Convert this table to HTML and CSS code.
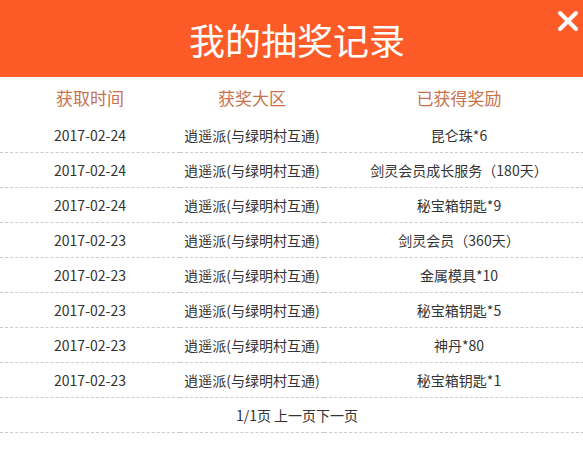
FILE: index.html
```html
<!DOCTYPE html>
<html lang="zh">
<head>
<meta charset="utf-8">
<link rel="stylesheet" href="styles.css">
</head>
<body>
<div class="dialog">
  <div class="head">
    <h1 class="title">我的抽奖记录</h1>
    <svg class="close" width="22" height="22" viewBox="0 0 22 22"><path d="M3 3 L19 19 M19 3 L3 19" stroke="#fff" stroke-width="4" stroke-linecap="round" fill="none"/></svg>
  </div>
  <table class="records">
    <thead>
      <tr><th class="c1">获取时间</th><th class="c2">获奖大区</th><th class="c3">已获得奖励</th></tr>
    </thead>
    <tbody>
      <tr><td>2017-02-24</td><td>逍遥派(与绿明村互通)</td><td>昆仑珠*6</td></tr>
      <tr><td>2017-02-24</td><td>逍遥派(与绿明村互通)</td><td>剑灵会员成长服务（180天）</td></tr>
      <tr><td>2017-02-24</td><td>逍遥派(与绿明村互通)</td><td>秘宝箱钥匙*9</td></tr>
      <tr><td>2017-02-23</td><td>逍遥派(与绿明村互通)</td><td>剑灵会员（360天）</td></tr>
      <tr><td>2017-02-23</td><td>逍遥派(与绿明村互通)</td><td>金属模具*10</td></tr>
      <tr><td>2017-02-23</td><td>逍遥派(与绿明村互通)</td><td>秘宝箱钥匙*5</td></tr>
      <tr><td>2017-02-23</td><td>逍遥派(与绿明村互通)</td><td>神丹*80</td></tr>
      <tr><td>2017-02-23</td><td>逍遥派(与绿明村互通)</td><td>秘宝箱钥匙*1</td></tr>
      <tr class="pager"><td colspan="3">1/1页 上一页下一页</td></tr>
    </tbody>
  </table>
</div>
</body>
</html>
```
FILE: styles.css
```css
html, body {
  margin: 0;
  padding: 0;
  background: #fff;
  overflow: hidden;
}
body {
  font-family: "Noto Sans CJK SC", "Noto Sans", sans-serif;
  color: #333;
}
.dialog {
  width: 594px;
}
.head {
  position: relative;
  height: 77px;
  background: #fc5a27;
  display: flex;
  align-items: center;
  justify-content: center;
}
.title {
  margin: 0;
  color: #fff;
  font-family: "Noto Sans CJK SC", sans-serif;
  font-weight: normal;
  font-size: 36px;
  line-height: 1;
}
.close {
  position: absolute;
  right: 15px;
  top: 10px;
}
.records {
  width: 594px;
  border-collapse: collapse;
  table-layout: fixed;
}
.records th {
  height: 41px;
  padding: 0;
  font-weight: normal;
  font-size: 17px;
  color: #c8734d;
  text-align: center;
}
.c1 { width: 180px; }
.c2 { width: 144px; }
.c3 { width: 270px; }
.records td {
  height: 34px;
  padding: 0;
  font-size: 14px;
  text-align: center;
  border-bottom: 1px dashed #ccc;
  white-space: nowrap;
}
```
